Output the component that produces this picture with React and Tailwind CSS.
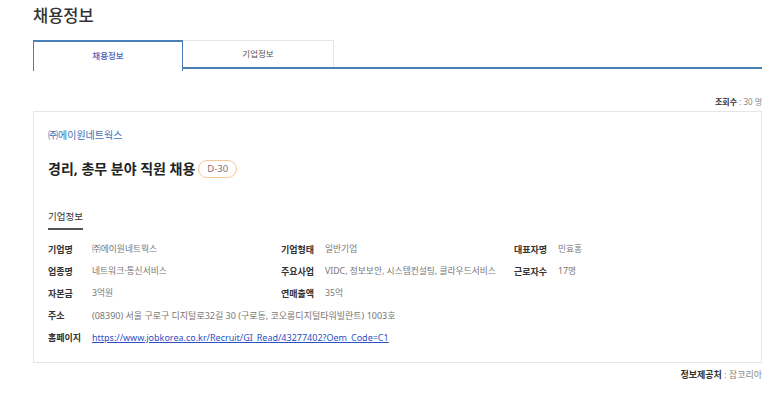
import React from 'react';

const rows = [
  [
    ['기업명', '㈜에이원네트웍스'],
    ['기업형태', '일반기업'],
    ['대표자명', '민효홍'],
  ],
  [
    ['업종명', '네트워크·통신서비스'],
    ['주요사업', 'VIDC, 정보보안, 시스템컨설팅, 클라우드서비스'],
    ['근로자수', '17명'],
  ],
  [
    ['자본금', '3억원'],
    ['연매출액', '35억'],
    null,
  ],
];

function Field({ label, value, size = 'text-[8.75px]' }) {
  return (
    <div className="flex items-center h-[22px]">
      <span className="w-[44px] shrink-0 font-bold text-[#333] text-[9px]">{label}</span>
      <span className={`text-[#777] whitespace-nowrap ${size}`}>{value}</span>
    </div>
  );
}

export default function App() {
  return (
    <div
      className="w-[773px] h-[393px] bg-white overflow-hidden pl-[33px] pr-[11px]"
      style={{ fontFamily: '"Noto Sans", "Noto Sans CJK KR", sans-serif' }}
    >
      {/* TITLE */}
      <h1 className="h-[40px] leading-[32px] text-[16.5px] text-[#333] font-medium">채용정보</h1>

      {/* TABS */}
      <div className="flex h-[29px] border-b-2 border-[#4a7fb6]">
        <div className="w-[150px] -mb-[2px] h-[31px] bg-white border-t-2 border-l border-r border-[#4a7fb6] flex items-center justify-center text-[8.5px] text-[#4662b8] font-medium">
          채용정보
        </div>
        <div className="w-[151px] border-t border-r border-[#e6e6e6] flex items-center justify-center text-[8.5px] text-[#555]">
          기업정보
        </div>
      </div>

      {/* VIEW COUNT */}
      <div className="mt-[27px] h-[12px] leading-[12px] text-right text-[8px] text-[#888]">
        <span className="font-bold text-[#333]">조회수</span> : 30 명
      </div>

      {/* CARD */}
      <div className="mt-[3px] border border-[#e3e6ea] px-[14px] pt-[16px] pb-[13px]">
        <div className="h-[14px] leading-[14px] text-[10px] text-[#3b6fb5]">㈜에이원네트웍스</div>

        <div className="mt-[18px] flex items-center gap-[3px] h-[18px]">
          <span className="text-[14px] font-bold text-[#222] leading-[18px]">경리, 총무 분야 직원 채용</span>
          <span className="h-[18px] px-[8px] rounded-full border border-[#f6c79a] text-[9.5px] text-[#8d6e6e] flex items-center">
            D-30
          </span>
        </div>

        <div className="mt-[32px] flex">
          <span className="h-[20px] leading-[14px] pb-[4px] border-b-2 border-[#555] text-[9.5px] text-[#333]">
            기업정보
          </span>
        </div>

        <div className="mt-[9px]">
          {rows.map((row, i) => (
            <div key={i} className="grid grid-cols-3">
              {row.map((f, j) => (f ? <Field key={j} label={f[0]} value={f[1]} /> : <div key={j} />))}
            </div>
          ))}
          <Field
            label="주소"
            size="text-[9px]"
            value="(08390) 서울 구로구 디지털로32길 30 (구로동, 코오롱디지털타워빌란트) 1003호"
          />
          <div className="flex items-center h-[22px]">
            <span className="w-[44px] shrink-0 font-bold text-[#333] text-[9px]">홈페이지</span>
            <a href="#" className="text-[#2b4fc4] underline text-[9px]">
              https://www.jobkorea.co.kr/Recruit/GI_Read/43277402?Oem_Code=C1
            </a>
          </div>
        </div>
      </div>

      {/* SOURCE */}
      <div className="mt-[5px] h-[14px] leading-[14px] text-right text-[9px] text-[#888]">
        <span className="font-bold text-[#333]">정보제공처</span> : 잡코리아
      </div>
    </div>
  );
}
